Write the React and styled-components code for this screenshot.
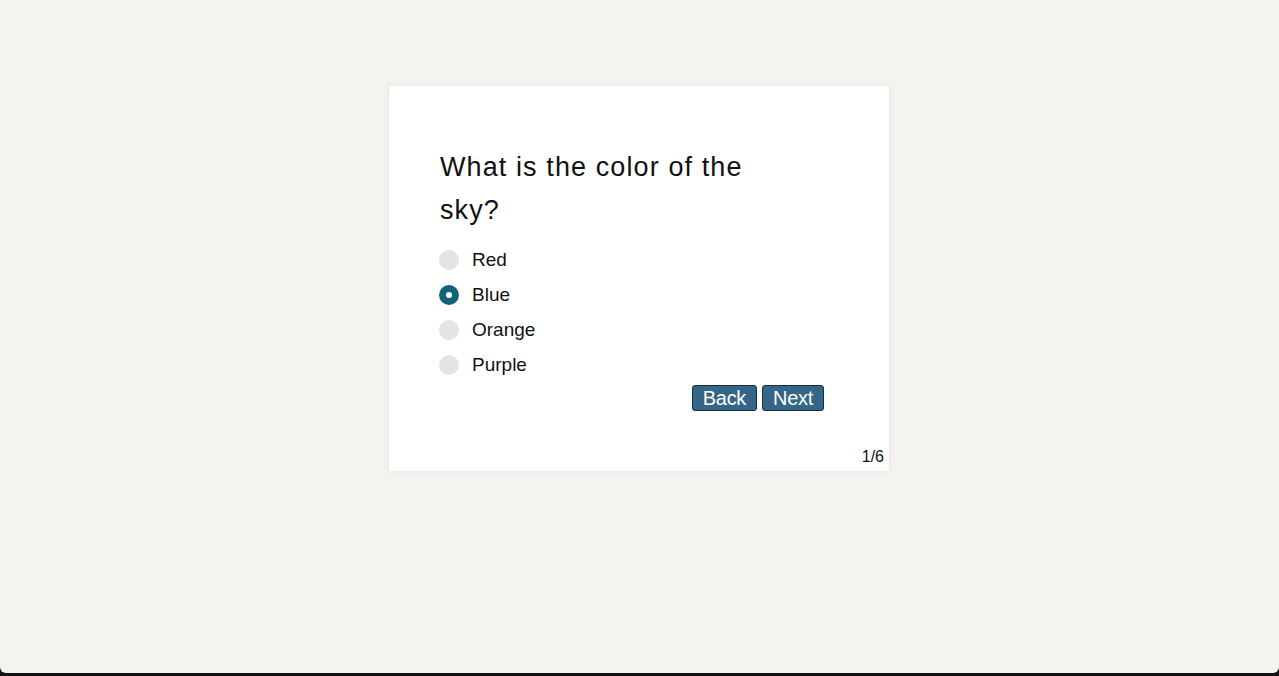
import React, { useState } from 'react'
import styled, { createGlobalStyle } from 'styled-components'

const Global = createGlobalStyle`
  html, body {
    margin: 0;
    padding: 0;
    background: #141414;
    font-family: "Liberation Sans", Arial, sans-serif;
  }
`

const Page = styled.div`
  height: 673px;
  background: #f4f3ef;
  border-radius: 0 0 6px 6px;
  display: flex;
  justify-content: center;
  padding-top: 86px;
  box-sizing: border-box;
`

const Card = styled.div`
  width: 500px;
  height: 385px;
  margin-right: 1px;
  background: #fff;
  box-shadow: 0 0 6px rgba(0, 0, 0, 0.07);
  display: flex;
  flex-direction: column;
  box-sizing: border-box;
`

const Body = styled.div`
  padding: 60px 65px 0 51px;
  display: flex;
  flex-direction: column;
`

const Question = styled.h1`
  margin: 0 0 10px;
  font-weight: normal;
  font-size: 27px;
  line-height: 43px;
  letter-spacing: 1.1px;
  color: #111;
  max-width: 330px;
`

const Options = styled.div`
  display: flex;
  flex-direction: column;
  margin-left: -1px;
`

const Option = styled.label`
  display: flex;
  align-items: center;
  height: 35px;
  gap: 13px;
  font-size: 19px;
  color: #111;
  cursor: pointer;
`

const Dot = styled.span`
  width: 20px;
  height: 20px;
  border-radius: 50%;
  box-sizing: border-box;
  background: ${p => (p.checked ? '#fff' : '#e4e4e4')};
  border: ${p => (p.checked ? '7px solid #13627c' : 'none')};
  flex-shrink: 0;
`

const Actions = styled.div`
  display: flex;
  justify-content: flex-end;
  gap: 5px;
  margin-top: 3px;
`

const Btn = styled.button`
  height: 26px;
  padding: 0 10px;
  background: #336688;
  color: #fff;
  border: 1px solid #1c2b35;
  border-radius: 3px;
  font-family: "Liberation Sans", Arial, sans-serif;
  font-size: 20px;
  line-height: 22px;
  letter-spacing: -0.3px;
  cursor: pointer;
`

const Footer = styled.div`
  margin-top: auto;
  display: flex;
  justify-content: flex-end;
  padding: 0 5px 5px 0;
  font-size: 16px;
  line-height: 18px;
  color: #111;
`

const options = ['Red', 'Blue', 'Orange', 'Purple']

export default function App() {
  const [picked, setPicked] = useState('Blue')
  return (
    <>
      <Global />
      <Page>
        <Card>
          <Body>
            <Question>What is the color of the sky?</Question>
            <Options>
              {options.map(o => (
                <Option key={o} onClick={() => setPicked(o)}>
                  <Dot checked={picked === o} />
                  {o}
                </Option>
              ))}
            </Options>
            <Actions>
              <Btn>Back</Btn>
              <Btn>Next</Btn>
            </Actions>
          </Body>
          <Footer>1/6</Footer>
        </Card>
      </Page>
    </>
  )
}
